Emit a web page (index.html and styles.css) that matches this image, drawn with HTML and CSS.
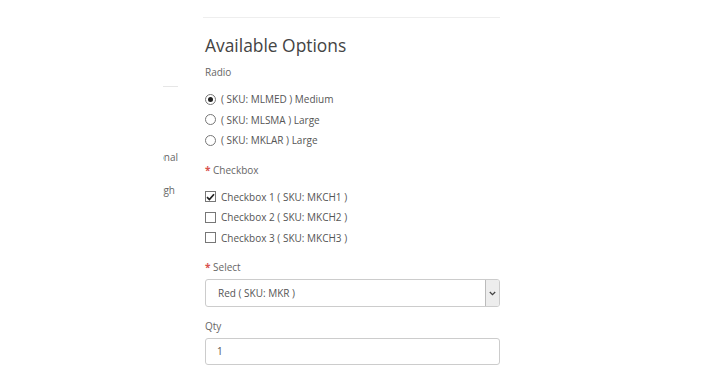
FILE: index.html
```html
<!DOCTYPE html>
<html lang="en">
<head>
    <meta charset="UTF-8">
    <meta name="viewport" content="width=device-width, initial-scale=1.0">
    <title>Available Options</title>
    <link rel="stylesheet" href="styles.css">
</head>
<body>
    <div class="page">
        <!-- left column, cut off by the frame -->
        <div class="side">
            <div class="side-rule"></div>
            <div class="side-row side-first"><span>Additional</span></div>
            <div class="side-row"><span>High</span></div>
        </div>

        <div class="product">
            <hr class="top-rule">
            <h3 class="title">Available Options</h3>

            <div class="group">
                <div class="group-label">Radio</div>
                <label class="option"><span class="radio checked"></span>( SKU: MLMED ) Medium</label>
                <label class="option"><span class="radio"></span>( SKU: MLSMA ) Large</label>
                <label class="option"><span class="radio"></span>( SKU: MKLAR ) Large</label>
            </div>

            <div class="group">
                <div class="group-label"><span class="required">*</span> Checkbox</div>
                <label class="option"><span class="check checked">
                    <svg width="9" height="8" viewBox="0 0 9 8"><path d="M1 4.2 L3.4 6.6 L8 1.2" fill="none" stroke="#222" stroke-width="1.7"/></svg>
                </span>Checkbox 1 ( SKU: MKCH1 )</label>
                <label class="option"><span class="check"></span>Checkbox 2 ( SKU: MKCH2 )</label>
                <label class="option"><span class="check"></span>Checkbox 3 ( SKU: MKCH3 )</label>
            </div>

            <div class="group">
                <div class="group-label select-label"><span class="required">*</span> Select</div>
                <div class="select">
                    <span class="select-value">Red ( SKU: MKR )</span>
                    <span class="select-arrow">
                        <svg width="7" height="5" viewBox="0 0 7 5"><path d="M0.8 1 L3.5 3.6 L6.2 1" fill="none" stroke="#444" stroke-width="1.3"/></svg>
                    </span>
                </div>
            </div>

            <div class="group">
                <div class="group-label qty-label">Qty</div>
                <div class="input">1</div>
            </div>
        </div>
    </div>
</body>
</html>
```

FILE: styles.css
```css
* {
    margin: 0;
    padding: 0;
    box-sizing: border-box;
}

body {
    font-family: "Open Sans", Arial, sans-serif;
    background-color: #fff;
    color: #555;
}

.page {
    display: flex;
    padding-left: 163px;
}

.side {
    width: 15px;
    overflow: hidden;
    padding-top: 86px;
    font-size: 10px;
    color: #666;
}

.side-rule {
    height: 1px;
    background-color: #e6e6e6;
}

.side-row {
    display: flex;
    justify-content: flex-end;
    white-space: nowrap;
    height: 16px;
    line-height: 16px;
}

.side-first {
    margin-top: 62px;
    margin-bottom: 17px;
}

.side-row:last-child {
    padding-right: 3px;
}

.product {
    width: 297px;
    margin-left: 25px;
    padding-top: 17px;
}

.top-rule {
    border: none;
    border-top: 1px solid #eee;
}

.title {
    font-size: 17.4px;
    font-weight: normal;
    color: #444;
    line-height: 24px;
    margin-top: 15px;
    margin-left: 2px;
}

.group {
    padding-left: 2px;
    margin-bottom: 11px;
}

.group:first-of-type {
    margin-top: 7px;
}

.group-label {
    font-size: 10px;
    line-height: 16px;
    color: #666;
    margin-bottom: 9px;
}

.required {
    color: #d9534f;
    font-weight: bold;
}

.option {
    display: flex;
    align-items: center;
    height: 20.5px;
    font-size: 10px;
    color: #555;
}

.radio {
    width: 11px;
    height: 11px;
    border: 1px solid #777;
    border-radius: 50%;
    margin-right: 5px;
    display: flex;
    align-items: center;
    justify-content: center;
}

.radio.checked::after {
    content: "";
    width: 5px;
    height: 5px;
    border-radius: 50%;
    background-color: #222;
}

.check {
    width: 11px;
    height: 11px;
    border: 1px solid #777;
    margin-right: 5px;
    display: flex;
    align-items: center;
    justify-content: center;
}

.select-label {
    margin-bottom: 4px;
}

.select {
    display: flex;
    height: 28px;
    border: 1px solid #ccc;
    border-radius: 3px;
    font-size: 10px;
    color: #555;
    overflow: hidden;
    margin-bottom: 1px;
}

.select-value {
    flex: 1;
    line-height: 26px;
    padding-left: 12px;
}

.select-arrow {
    width: 14px;
    background-color: #ededed;
    border-left: 1px solid #bbb;
    display: flex;
    align-items: center;
    justify-content: center;
}

.qty-label {
    margin-top: 3px;
    margin-bottom: 4px;
}

.input {
    height: 27px;
    line-height: 25px;
    border: 1px solid #ccc;
    border-radius: 3px;
    font-size: 10px;
    padding-left: 11px;
    color: #555;
}
```
